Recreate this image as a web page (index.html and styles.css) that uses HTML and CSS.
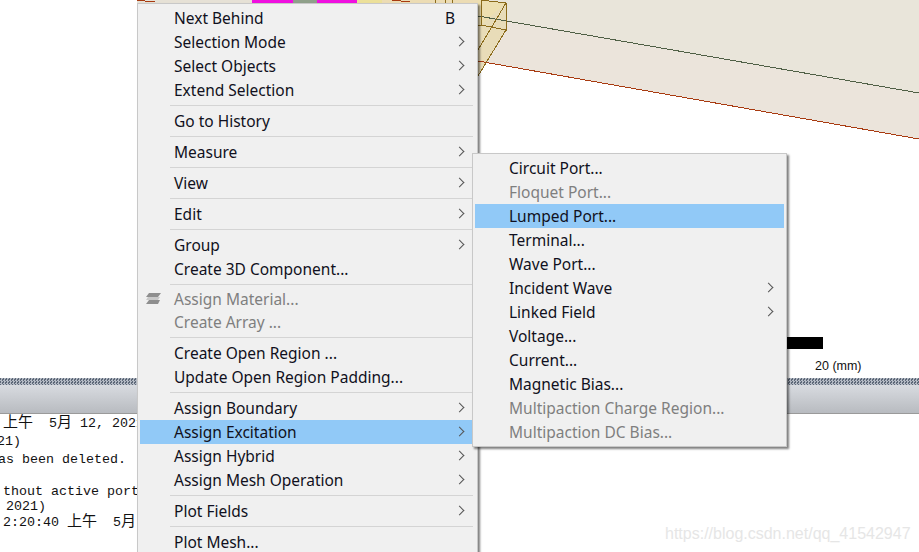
FILE: index.html
```html
<!DOCTYPE html>
<html>
<head>
<meta charset="utf-8">
<title>Assign Excitation</title>
<link rel="stylesheet" href="styles.css">
</head>
<body>
<div class="app">
  <div class="viewport">
    <svg class="scene" width="919" height="378" viewBox="0 0 919 378">
      <polygon points="478,16 919,93 919,0 478,0" fill="#e9e5da"/>
      <polygon points="478,16 919,93 919,139 478,61" fill="#ebe4db"/>
      <rect x="137" y="0" width="115" height="4" fill="#e6e1d6"/>
      <rect x="382" y="0" width="98" height="4" fill="#ecdcb4"/>
      <polygon points="478,0 506,3 506,30 478,76" fill="#e8dcb8"/>
      <polygon points="478,0 506,3 481,25 478,25" fill="#eddfb0"/>
      <rect x="252" y="0" width="105" height="4" fill="#f010e0"/>
      <rect x="293" y="0" width="24" height="3" fill="#8fa08a"/>
      <rect x="357" y="0" width="25" height="4" fill="#ece09a"/>
      <g class="crisp" fill="none">
        <path d="M478 16L919 93" stroke="#4f5f45"/>
        <path d="M478 61L919 139" stroke="#a83a10"/>
        <path d="M137 0L145 1H155M392 0L410 2" stroke="#a83a10"/>
        <path d="M481 0V25L506 30V3L481 0M506 3L478 50M506 30L478 76M478 25H481M435 0V3M445 0V3M452 0V3" stroke="#8c6c1c"/>
      </g>
    </svg>
    <div class="scale-bar"></div>
    <div class="scale-label">20 (mm)</div>
  </div>
  <div class="splitter"></div>
  <div class="panel-head"></div>
  <div class="console">
    <div class="line l1"><span class="cjk">上午</span>  5<span class="cjk">月</span> 12, 2021</div>
    <div class="line l2">21)</div>
    <div class="line l3">has been deleted.</div>
    <div class="line l4">thout active port</div>
    <div class="line l5"> 2021)</div>
    <div class="line l6">2:20:40 <span class="cjk">上午</span>  5<span class="cjk">月</span></div>
  </div>
  <div class="watermark">https://blog.csdn.net/qq_41542947</div>
</div>

<div class="menu main-menu">
  <div class="item"><span>Next Behind</span><span class="key">B</span></div>
  <div class="item sub">Selection Mode</div>
  <div class="item sub">Select Objects</div>
  <div class="item sub">Extend Selection</div>
  <div class="sep"></div>
  <div class="item">Go to History</div>
  <div class="sep"></div>
  <div class="item sub">Measure</div>
  <div class="sep"></div>
  <div class="item sub">View</div>
  <div class="sep"></div>
  <div class="item sub">Edit</div>
  <div class="sep"></div>
  <div class="item sub">Group</div>
  <div class="item">Create 3D Component...</div>
  <div class="sep sep-tight"></div>
  <div class="item off short">
    <svg class="mat-icon" width="17" height="14" viewBox="0 0 17 14"><path d="M4 1H16L13 5H1Z" fill="#8e8e8e"/><path d="M3 5H15L13 8H1Z" fill="#c8c8c8"/><path d="M4 8H15L13 12H1Z" fill="#8e8e8e"/></svg>
    Assign Material...</div>
  <div class="item off">Create Array ...</div>
  <div class="sep"></div>
  <div class="item">Create Open Region ...</div>
  <div class="item">Update Open Region Padding...</div>
  <div class="sep"></div>
  <div class="item sub">Assign Boundary</div>
  <div class="item sub hot">Assign Excitation</div>
  <div class="item sub">Assign Hybrid</div>
  <div class="item sub">Assign Mesh Operation</div>
  <div class="sep"></div>
  <div class="item sub">Plot Fields</div>
  <div class="sep"></div>
  <div class="item">Plot Mesh...</div>
</div>

<div class="menu sub-menu">
  <div class="item">Circuit Port...</div>
  <div class="item off">Floquet Port...</div>
  <div class="item hot">Lumped Port...</div>
  <div class="item">Terminal...</div>
  <div class="item">Wave Port...</div>
  <div class="item sub">Incident Wave</div>
  <div class="item sub">Linked Field</div>
  <div class="item">Voltage...</div>
  <div class="item">Current...</div>
  <div class="item">Magnetic Bias...</div>
  <div class="item off">Multipaction Charge Region...</div>
  <div class="item off">Multipaction DC Bias...</div>
</div>
</body>
</html>
```
FILE: styles.css
```css
* { box-sizing: border-box; }
html, body { margin: 0; padding: 0; width: 919px; height: 552px; overflow: hidden; background: #fff; }
.app { position: relative; width: 919px; height: 552px; display: flex; flex-direction: column; overflow: hidden; }
.viewport { position: relative; height: 378px; flex: none; }
.scene { display: block; }
.crisp { shape-rendering: crispEdges; }
.scale-bar { position: absolute; left: 787px; top: 337px; width: 36px; height: 12px; background: #000; }
.scale-label { position: absolute; left: 815px; top: 359px; font: 12.5px/14px "Liberation Sans", sans-serif; color: #111; }
.splitter { height: 7px; flex: none; background-color: #6f7a88; background-image: conic-gradient(#b4bac4 25%, #5d6878 0 50%, #b4bac4 0 75%, #5d6878 0); background-size: 3px 3px; }
.panel-head { height: 29px; flex: none; background: linear-gradient(#d8dbe0, #b8bbc0); border-bottom: 1px solid #9a9a9a; }
.console { flex: 1; padding-top: 2px; font: 13.33px/16px "Liberation Mono", "Noto Sans CJK SC", monospace; color: #111; }
.line { height: 16px; white-space: pre; }
.cjk { font-size: 15px; line-height: 1; }
.l1 { margin-left: 3px; }
.l2 { margin-left: -3px; margin-top: 2px; }
.l3 { margin-left: -10px; margin-top: 2px; }
.l4 { margin-left: 3px; margin-top: 16px; }
.l5 { margin-left: -2px; margin-top: -1px; }
.l6 { margin-left: 3px; }
.watermark { position: absolute; left: 665px; top: 525px; font: 16px/18px "Liberation Sans", sans-serif; color: #e6e6e6; white-space: nowrap; }
.menu { position: absolute; background: #f0f0f0; border: 1px solid #c8c8c8; padding: 2px; box-shadow: 2px 2px 2px rgba(0,0,0,.5); font: 15.5px/24px "Noto Sans", sans-serif; color: #101020; }
.main-menu { left: 137px; top: 3px; width: 341px; height: 570px; }
.sub-menu { left: 472px; top: 153px; width: 315px; height: 294px; }
.item { position: relative; height: 24px; display: flex; justify-content: space-between; white-space: nowrap; }
.main-menu .item { padding-left: 34px; padding-right: 20px; }
.sub-menu .item { padding-left: 34px; }
.hot { background: #91c9f7; }
.off { color: #7f7f7f; }
.short { height: 23px; }
.sep { height: 1px; margin: 3px 2px 3px 30px; background: #d4d4d4; }
.sep-tight { margin-bottom: 2px; }
.sub::after { content: ""; position: absolute; right: 12px; top: 8px; width: 6px; height: 6px; border-top: 1px solid #555; border-right: 1px solid #555; transform: rotate(45deg); }
.mat-icon { position: absolute; left: 5px; top: 5px; }
```
